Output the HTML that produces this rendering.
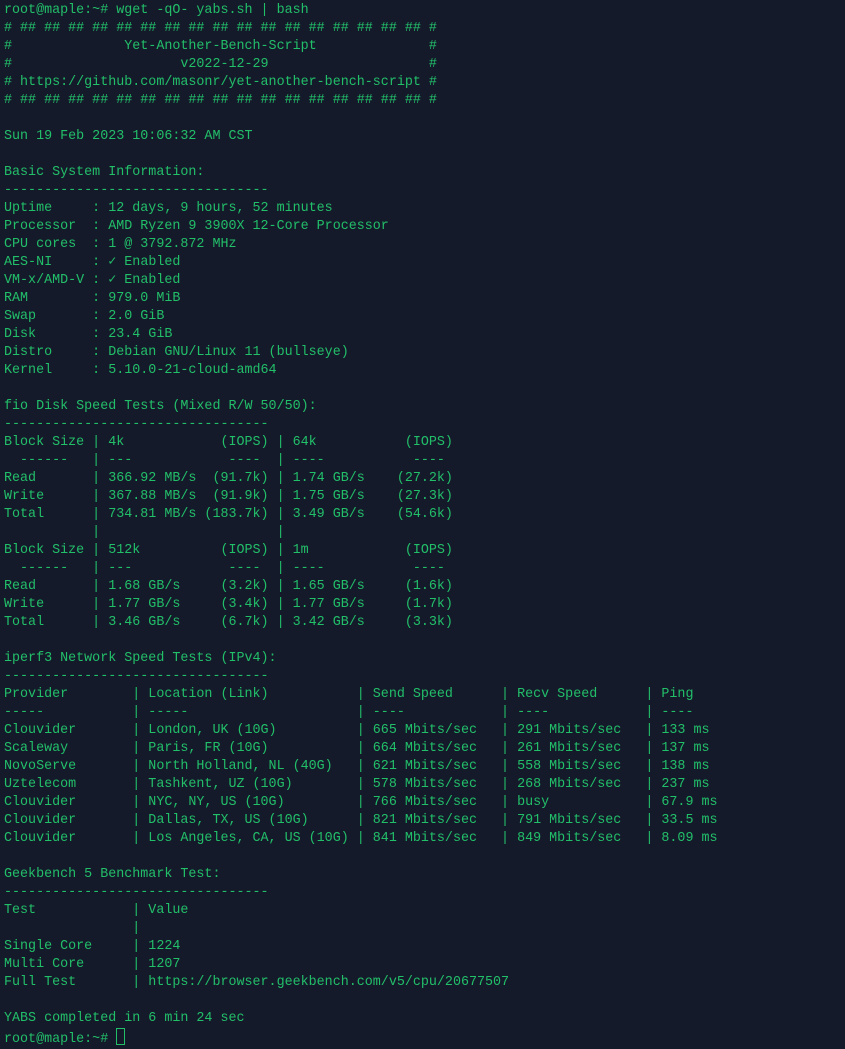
<!DOCTYPE html>
<html><head><meta charset="utf-8"><style>
html,body{margin:0;padding:0;background:#151a2b;width:845px;height:1034px;overflow:hidden}
pre{margin:0;position:absolute;left:4px;top:2px;font-family:"Liberation Mono","DejaVu Sans Mono",monospace;font-size:13.36px;line-height:18px;color:#22bf69;white-space:pre}
.cur{display:inline-block;width:7px;height:15px;border:1px solid #22bf69;vertical-align:-3px}
</style></head><body><pre>root@maple:~# wget -qO- yabs.sh | bash
# ## ## ## ## ## ## ## ## ## ## ## ## ## ## ## ## ## #
#              Yet-Another-Bench-Script              #
#                     v2022-12-29                    #
# https://github.com/masonr/yet-another-bench-script #
# ## ## ## ## ## ## ## ## ## ## ## ## ## ## ## ## ## #

Sun 19 Feb 2023 10:06:32 AM CST

Basic System Information:
---------------------------------
Uptime     : 12 days, 9 hours, 52 minutes
Processor  : AMD Ryzen 9 3900X 12-Core Processor
CPU cores  : 1 @ 3792.872 MHz
AES-NI     : ✓ Enabled
VM-x/AMD-V : ✓ Enabled
RAM        : 979.0 MiB
Swap       : 2.0 GiB
Disk       : 23.4 GiB
Distro     : Debian GNU/Linux 11 (bullseye)
Kernel     : 5.10.0-21-cloud-amd64

fio Disk Speed Tests (Mixed R/W 50/50):
---------------------------------
Block Size | 4k            (IOPS) | 64k           (IOPS)
  ------   | ---            ----  | ----           ----
Read       | 366.92 MB/s  (91.7k) | 1.74 GB/s    (27.2k)
Write      | 367.88 MB/s  (91.9k) | 1.75 GB/s    (27.3k)
Total      | 734.81 MB/s (183.7k) | 3.49 GB/s    (54.6k)
           |                      |
Block Size | 512k          (IOPS) | 1m            (IOPS)
  ------   | ---            ----  | ----           ----
Read       | 1.68 GB/s     (3.2k) | 1.65 GB/s     (1.6k)
Write      | 1.77 GB/s     (3.4k) | 1.77 GB/s     (1.7k)
Total      | 3.46 GB/s     (6.7k) | 3.42 GB/s     (3.3k)

iperf3 Network Speed Tests (IPv4):
---------------------------------
Provider        | Location (Link)           | Send Speed      | Recv Speed      | Ping
-----           | -----                     | ----            | ----            | ----
Clouvider       | London, UK (10G)          | 665 Mbits/sec   | 291 Mbits/sec   | 133 ms
Scaleway        | Paris, FR (10G)           | 664 Mbits/sec   | 261 Mbits/sec   | 137 ms
NovoServe       | North Holland, NL (40G)   | 621 Mbits/sec   | 558 Mbits/sec   | 138 ms
Uztelecom       | Tashkent, UZ (10G)        | 578 Mbits/sec   | 268 Mbits/sec   | 237 ms
Clouvider       | NYC, NY, US (10G)         | 766 Mbits/sec   | busy            | 67.9 ms
Clouvider       | Dallas, TX, US (10G)      | 821 Mbits/sec   | 791 Mbits/sec   | 33.5 ms
Clouvider       | Los Angeles, CA, US (10G) | 841 Mbits/sec   | 849 Mbits/sec   | 8.09 ms

Geekbench 5 Benchmark Test:
---------------------------------
Test            | Value
                |
Single Core     | 1224
Multi Core      | 1207
Full Test       | https://browser.geekbench.com/v5/cpu/20677507

YABS completed in 6 min 24 sec
root@maple:~# <span class="cur"></span></pre></body></html>
